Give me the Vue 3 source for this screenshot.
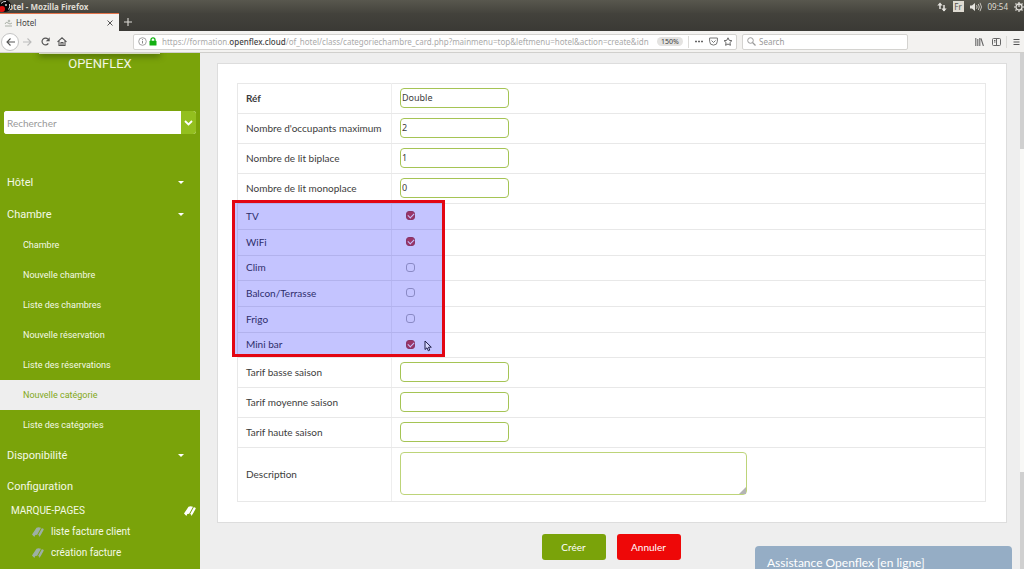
<script setup>
import { ref } from 'vue'

const search = ref('')
const query = ref('')
const description = ref('')

const chambreLinks = [
  'Chambre',
  'Nouvelle chambre',
  'Liste des chambres',
  'Nouvelle réservation',
  'Liste des réservations',
  'Nouvelle catégorie',
  'Liste des catégories',
]
const activeLink = 'Nouvelle catégorie'
const bookmarks = ['liste facture client', 'création facture', 'création client']

const details = ref([
  { id: 'ref', label: 'Réf', value: 'Double', required: true },
  { id: 'occupants', label: "Nombre d'occupants maximum", value: '2' },
  { id: 'biplace', label: 'Nombre de lit biplace', value: '1' },
  { id: 'monoplace', label: 'Nombre de lit monoplace', value: '0' },
])
const options = ref([
  { id: 'tv', label: 'TV', checked: true },
  { id: 'wifi', label: 'WiFi', checked: true },
  { id: 'clim', label: 'Clim', checked: false },
  { id: 'balcon', label: 'Balcon/Terrasse', checked: false },
  { id: 'frigo', label: 'Frigo', checked: false },
  { id: 'minibar', label: 'Mini bar', checked: true },
])
const prices = ref([
  { id: 'basse', label: 'Tarif basse saison', value: '' },
  { id: 'moyenne', label: 'Tarif moyenne saison', value: '' },
  { id: 'haute', label: 'Tarif haute saison', value: '' },
])
</script>

<template>
  <div class="screen">
    <header class="titlebar">
      <svg class="recorder" width="14" height="13" viewBox="0 0 14 13" aria-hidden="true">
        <circle cx="5" cy="6" r="6" fill="#080808" />
        <circle cx="2" cy="9" r="3" fill="#e01010" />
        <path d="M1 3.500Q3 1 6 1.500M9.500 4Q10.500 7 8.500 9.500" stroke="#ddd" fill="none" />
        <circle cx="6" cy="5" r="1" fill="#ccc" />
      </svg>
      <span class="title">Hotel - Mozilla Firefox</span>
      <div class="tray">
        <svg width="10" height="10" viewBox="0 0 10 10" aria-hidden="true">
          <path d="M3 7V2M7 3v6" stroke="#e6e4df" stroke-width="1.500" />
          <path d="M.3 3.500 3 .5l2.700 3zM4.300 6.500 7 9.500l2.700-3z" fill="#e6e4df" />
        </svg>
        <span class="lang">Fr</span>
        <svg width="12" height="10" viewBox="0 0 12 10" aria-hidden="true">
          <path d="M0 3.500h2L5 1v8L2 6.500H0z" fill="#e6e4df" />
          <path d="M6.500 3.200q1.200 1.800 0 3.600M8.300 2q2 3 0 6M10 .8q3 4.200 0 8.400" stroke="#c4c2bc" fill="none" />
        </svg>
        <span class="clock">09:54</span>
        <svg width="10" height="10" viewBox="0 0 10 10" aria-hidden="true">
          <circle cx="5" cy="5" r="3" fill="none" stroke="#e6e4df" stroke-width="1.300" />
          <path d="M5 0v5M0 5h1.500M8.500 5H10M1.500 1.500l1 1M8.500 1.500l-1 1M1.500 8.500l1-1M8.500 8.500l-1-1M5 8.500V10" stroke="#e6e4df" stroke-width="1.200" />
        </svg>
      </div>
    </header>

    <div class="tabs">
      <div class="tab">
        <svg width="9" height="8" viewBox="0 0 9 8" aria-hidden="true">
          <path d="M1 5q1-3 3-1t4 0M1 7h7" stroke="#aab0a6" fill="none" />
          <circle cx="5" cy="2" r="1.300" fill="#b9beb6" />
        </svg>
        <span class="tab-name">Hotel</span>
        <button class="plain" aria-label="Fermer l'onglet">
          <svg width="6" height="6" viewBox="0 0 6 6"><path d="M.5.5l5 5M5.500.5l-5 5" stroke="#555" /></svg>
        </button>
      </div>
      <button class="plain add" aria-label="Nouvel onglet">
        <svg width="8" height="8" viewBox="0 0 8 8"><path d="M4 0v8M0 4h8" stroke="#dcdad5" stroke-width="1.100" /></svg>
      </button>
    </div>

    <nav class="toolbar" aria-label="Navigation">
      <button class="plain back" aria-label="Précédent">
        <svg width="9" height="8" viewBox="0 0 9 8"><path d="M9 4H1M4.500.5 1 4l3.500 3.500" stroke="#555" stroke-width="1.100" fill="none" /></svg>
      </button>
      <button class="plain forward" aria-label="Suivant">
        <svg width="9" height="8" viewBox="0 0 9 8"><path d="M0 4h8M4.500.5 8 4 4.500 7.500" stroke="#bbb" stroke-width="1.100" fill="none" /></svg>
      </button>
      <button class="plain reload" aria-label="Actualiser">
        <svg width="9" height="9" viewBox="0 0 9 9"><path d="M7.300 6.300A3.400 3.400 0 1 1 7 2.200" stroke="#555" stroke-width="1.200" fill="none" /><path d="M8.700.3v3.900H4.800z" fill="#555" /></svg>
      </button>
      <button class="plain home" aria-label="Accueil">
        <svg width="10" height="9" viewBox="0 0 10 9"><path d="M.5 4.800 5 .8l4.500 4M2 4v4.500h6V4M4 8.500V5.500h2v3" stroke="#555" stroke-width="1.100" fill="none" /></svg>
      </button>
      <div class="urlbar">
        <svg width="9" height="9" viewBox="0 0 9 9" aria-hidden="true"><circle cx="4.500" cy="4.500" r="3.800" fill="none" stroke="#999" stroke-width=".9" /><path d="M4.500 4v2.500M4.500 2.200v1" stroke="#888" /></svg>
        <svg class="lock" width="8" height="9" viewBox="0 0 8 9" aria-hidden="true"><path d="M2 4V2.800a2 2 0 0 1 4 0V4" stroke="#12b012" stroke-width="1.300" fill="none" /><rect x=".5" y="3.800" width="7" height="4.700" rx=".6" fill="#12b012" /></svg>
        <span class="url">https://formation.<b>openflex.cloud</b>/of_hotel/class/categoriechambre_card.php?mainmenu=top&amp;leftmenu=hotel&amp;action=create&amp;idn</span>
        <button class="plain zoom">150%</button>
        <span class="divider"></span>
        <button class="plain" aria-label="Actions">
          <svg width="10" height="9" viewBox="0 0 10 9"><path d="M1 4.500h2M4 4.500h2M7 4.500h2" stroke="#666" stroke-width="1.500" /></svg>
        </button>
        <button class="plain" aria-label="Pocket">
          <svg width="9" height="9" viewBox="0 0 9 9"><path d="M.6 1h7.800v3.200a3.900 3.900 0 0 1-7.800 0zM2.500 3.500l2 2 2-2" stroke="#777" fill="none" /></svg>
        </button>
        <button class="plain" aria-label="Favori">
          <svg width="10" height="9" viewBox="0 0 10 9"><path d="M5 .8l1.200 2.500 2.700.4-2 1.900.5 2.700L5 7 2.600 8.300l.5-2.700-2-1.900 2.700-.4z" stroke="#666" fill="none" /></svg>
        </button>
      </div>
      <label class="websearch">
        <svg width="9" height="9" viewBox="0 0 9 9" aria-hidden="true"><circle cx="3.500" cy="3.500" r="2.800" fill="none" stroke="#999" /><path d="M5.500 5.500 8.500 8.500" stroke="#999" stroke-width="1.200" /></svg>
        <input v-model="query" type="text" placeholder="Search" aria-label="Search" />
      </label>
      <div class="tools">
        <button class="plain" aria-label="Bibliothèque">
          <svg width="9" height="8" viewBox="0 0 9 8"><path d="M.8 0v8M2.800 1v7M4.800 0v8M6 .5 8.400 8" stroke="#666" stroke-width="1.100" fill="none" /></svg>
        </button>
        <button class="plain" aria-label="Panneau latéral">
          <svg width="9" height="8" viewBox="0 0 9 8"><rect x=".5" y=".5" width="8" height="7" rx="1" fill="none" stroke="#666" /><path d="M4.500 1v6M2 2.500h1.500M2 4h1.500" stroke="#666" /></svg>
        </button>
        <span class="divider"></span>
        <button class="plain" aria-label="Menu">
          <svg width="7" height="8" viewBox="0 0 7 8"><path d="M.5 1.500h6M.5 4h6M.5 6.500h6" stroke="#555" /></svg>
        </button>
      </div>
    </nav>

    <div class="page">
      <aside class="sidebar">
        <div class="flap"></div>
        <div class="brand">OPENFLEX</div>
        <form class="find" @submit.prevent>
          <input v-model="search" type="text" placeholder="Rechercher" aria-label="Rechercher" />
          <button class="plain" aria-label="Choisir la recherche">
            <svg width="9" height="6" viewBox="0 0 9 6"><path d="M1 1l3.500 3.500L8 1" stroke="#fff" stroke-width="1.800" fill="none" /></svg>
          </button>
        </form>
        <nav class="menu" aria-label="Menu">
          <a class="top" href="#">Hôtel<i class="caret"></i></a>
          <a class="top" href="#">Chambre<i class="caret"></i></a>
          <a v-for="link in chambreLinks" :key="link" class="sub" :class="{ active: link === activeLink }" href="#">{{ link }}</a>
          <a class="top" href="#">Disponibilité<i class="caret"></i></a>
          <a class="top" href="#">Configuration</a>
        </nav>
        <div class="marks-head">
          <span>MARQUE-PAGES</span>
          <svg width="12" height="10" viewBox="0 0 12 10" aria-hidden="true">
            <path d="M0 7.500 4.500.8Q6.500-.2 9 .8L5 8Q3.200 7 2.400 10z" fill="#fff" />
            <path d="M5.800 8.400 9.800 1.300q1.700.1 2 1.200L8.800 8 7.200 10 7 8z" fill="#fff" />
          </svg>
        </div>
        <a v-for="mark in bookmarks" :key="mark" class="mark" href="#">
          <svg width="12" height="10" viewBox="0 0 12 10" aria-hidden="true">
            <path d="M0 7.500 4.500.8Q6.500-.2 9 .8L5 8Q3.200 7 2.400 10z" fill="#9db0a4" />
            <path d="M5.800 8.400 9.800 1.300q1.700.1 2 1.200L8.800 8 7.200 10 7 8z" fill="#9db0a4" />
          </svg>
          <span>{{ mark }}</span>
        </a>
      </aside>

      <main class="content">
        <form id="category" class="card" @submit.prevent>
          <div class="sheet">
            <table>
              <tbody>
                <tr v-for="field in details" :key="field.id" class="text-row">
                  <th scope="row" :class="{ required: field.required }"><label :for="field.id">{{ field.label }}</label></th>
                  <td><input :id="field.id" v-model="field.value" class="box" type="text" /></td>
                </tr>
              </tbody>
              <tbody class="checks">
                <tr v-for="option in options" :key="option.id">
                  <th scope="row"><label :for="option.id">{{ option.label }}</label></th>
                  <td><input :id="option.id" v-model="option.checked" class="tick" type="checkbox" /></td>
                </tr>
              </tbody>
              <tbody>
                <tr v-for="price in prices" :key="price.id" class="text-row">
                  <th scope="row"><label :for="price.id">{{ price.label }}</label></th>
                  <td><input :id="price.id" v-model="price.value" class="box" type="text" /></td>
                </tr>
                <tr class="area-row">
                  <th scope="row"><label for="description">Description</label></th>
                  <td>
                    <div class="area">
                      <textarea id="description" v-model="description"></textarea>
                      <svg class="grip" width="7" height="7" viewBox="0 0 7 7" aria-hidden="true"><path d="M7 0v7H0z" fill="#b4b4b4" /></svg>
                    </div>
                  </td>
                </tr>
              </tbody>
            </table>
            <div class="highlight">
              <svg class="pointer" width="8" height="12" viewBox="0 0 8 12" aria-hidden="true"><path d="M1 1v8.500l2-1.700 1.300 3 1.500-.7-1.300-2.900H7.300z" fill="#d8d8ff" stroke="#20204a" /></svg>
            </div>
          </div>
        </form>
        <div class="actions">
          <button class="plain create" type="submit" form="category">Créer</button>
          <button class="plain cancel" type="button">Annuler</button>
        </div>
        <button class="plain chat">Assistance Openflex [en ligne]</button>
      </main>
      <div class="scroll"><div class="thumb"></div><div class="track"></div><div class="rest"></div></div>
    </div>
  </div>
</template>

<style>
body {
  margin: 0;
  overflow: hidden;
}
</style>

<style scoped>
* {
  box-sizing: border-box;
}
.screen {
  display: flex;
  flex-direction: column;
  height: 100vh;
  overflow: hidden;
  font-family: "Noto Sans", sans-serif;
  font-size: 10px;
  color: #3c3c3c;
  background: #eee;
}
svg {
  display: block;
  flex: none;
}
a {
  text-decoration: none;
}
input,
textarea {
  font-family: inherit;
  color: inherit;
  margin: 0;
  outline: 0;
}
.plain {
  border: 0;
  background: none;
  padding: 0;
  margin: 0;
  font-family: inherit;
  color: inherit;
  display: flex;
  align-items: center;
  justify-content: center;
  flex: none;
}
.titlebar {
  height: 13px;
  flex: none;
  display: flex;
  align-items: center;
  position: relative;
  background: linear-gradient(#58574e, #45443d);
}
.recorder {
  position: absolute;
  left: 0;
  top: 0;
}
.title {
  padding-left: 2px;
  font-size: 8px;
  line-height: 12px;
  font-weight: 700;
  color: #dfdbd2;
}
.tray {
  margin-left: auto;
  display: flex;
  align-items: center;
  gap: 6px;
  color: #dfdbd2;
}
.lang {
  width: 11px;
  height: 11px;
  background: #dfdbd2;
  color: #55534c;
  font-size: 8px;
  line-height: 11px;
  text-align: center;
}
.clock {
  font-size: 8px;
  line-height: 12px;
}
.tabs {
  height: 18px;
  flex: none;
  display: flex;
  background: linear-gradient(#43423c, #3a3935);
}
.tab {
  width: 119px;
  display: flex;
  align-items: center;
  padding: 0 6px 0 4px;
  gap: 3px;
  background: #f3f2f0;
  border-top: 1px solid #e2734a;
}
.tab-name {
  flex: 1;
  font-size: 8px;
  line-height: 12px;
  color: #444;
}
.add {
  margin-left: 5px;
}
.toolbar {
  height: 22px;
  flex: none;
  display: flex;
  align-items: center;
  background: #f3f2f0;
  border-bottom: 1px solid #d0cfcc;
}
.back {
  width: 18px;
  height: 18px;
  margin-left: 1px;
  border: 1px solid #c4c4c4;
  border-radius: 50%;
  background: #fff;
}
.forward {
  margin-left: 4px;
}
.reload {
  margin-left: 9px;
}
.home {
  margin-left: 7px;
}
.urlbar {
  flex: 1;
  min-width: 0;
  height: 16px;
  margin-left: 66px;
  display: flex;
  align-items: center;
  gap: 5px;
  padding: 0 3px 0 4px;
  background: #fff;
  border: 1px solid #d4d3d0;
  border-radius: 2px;
}
.urlbar .lock {
  margin-left: -3px;
}
.url {
  flex: 1;
  min-width: 0;
  overflow: hidden;
  white-space: nowrap;
  font-size: 8px;
  line-height: 12px;
  color: #aaa;
}
.url b {
  font-weight: 500;
  color: #444;
}
.zoom {
  width: 26px;
  height: 9px;
  border-radius: 5px;
  background: #e4e3e1;
  font-size: 7px;
  line-height: 9px;
}
.divider {
  width: 1px;
  height: 12px;
  background: #dcdbd8;
}
.websearch {
  width: 166px;
  height: 16px;
  margin-left: 5px;
  display: flex;
  align-items: center;
  gap: 3px;
  padding: 0 4px;
  background: #fff;
  border: 1px solid #d4d3d0;
  border-radius: 2px;
}
.websearch input {
  border: 0;
  padding: 0;
  min-width: 0;
  flex: 1;
  font-size: 8px;
  line-height: 12px;
}
::placeholder {
  color: #999;
  opacity: 1;
}
.tools {
  display: flex;
  align-items: center;
  gap: 8px;
  margin-left: 67px;
  padding-right: 4px;
}
.tools .divider {
  margin: 0 -2px 0 -3px;
}
.page {
  flex: 1;
  min-height: 0;
  display: flex;
}
.sidebar {
  width: 200px;
  flex: none;
  overflow: hidden;
  position: relative;
  background: #7aa30a;
  color: #f4f9e6;
  font-family: Roboto, sans-serif;
}
.flap {
  position: absolute;
  left: 39px;
  top: -3px;
  width: 121px;
  height: 4px;
  background: #d5dcc0;
  box-shadow: 0 2px 6px rgba(40, 60, 0, 0.7);
}
.brand {
  padding-top: 3px;
  text-align: center;
  font-size: 13px;
  line-height: 16px;
}
.find {
  display: flex;
  height: 23px;
  margin: 39px 4px 0;
  border-radius: 3px;
  overflow: hidden;
  background: #fff;
}
.find input {
  flex: 1;
  min-width: 0;
  border: 0;
  padding: 0 3px;
  font-family: Lato, sans-serif;
  font-size: 10px;
  color: #444;
}
.find button {
  width: 15px;
  background: #93bf1f;
}
.menu {
  margin-top: 32px;
}
.menu a {
  display: flex;
  align-items: center;
  color: inherit;
}
.menu .top {
  height: 32px;
  padding: 0 16px 0 7px;
  font-size: 11px;
  justify-content: space-between;
}
.menu .sub ~ .top {
  height: 31px;
}
.caret {
  border: 3px solid transparent;
  border-top-color: #fff;
  border-bottom: 0;
}
.menu .sub {
  height: 30px;
  padding-left: 23px;
  font-size: 9px;
}
.menu a.active {
  background: #eee;
  color: #82a820;
}
.marks-head {
  height: 17px;
  display: flex;
  align-items: center;
  justify-content: space-between;
  padding: 0 4px 0 11px;
  margin-bottom: 2px;
  font-size: 10px;
}
.mark {
  display: flex;
  align-items: center;
  gap: 7px;
  height: 21px;
  padding-left: 32px;
  font-size: 10px;
  color: inherit;
}
.content {
  flex: 1;
  min-width: 0;
  position: relative;
  padding: 10px 13px 0 17px;
}
.card {
  background: #fff;
  border: 1px solid #ddd;
  padding: 19px 20px 20px 19px;
  font-family: Lato, sans-serif;
}
.sheet {
  position: relative;
}
table {
  width: 100%;
  border-collapse: collapse;
  table-layout: fixed;
}
th,
td {
  border-top: 1px solid #e8e8e8;
  border-bottom: 1px solid #e8e8e8;
  padding: 0 8px 2px;
  vertical-align: middle;
  text-align: left;
}
th {
  width: 154px;
  border-left: 1px solid #e8e8e8;
  border-right: 1px solid #eee;
  font-weight: 400;
  font-size: 10px;
  line-height: 14px;
  white-space: nowrap;
}
td {
  border-right: 1px solid #e8e8e8;
}
.required {
  font-weight: 700;
}
.text-row {
  height: 30px;
}
.checks tr {
  height: 26px;
}
.checks tr:nth-child(3n) {
  height: 25px;
}
.area-row {
  height: 54px;
}
.box {
  display: block;
  width: 109px;
  height: 20px;
  padding: 0 1px;
  border: 1px solid #a5c455;
  border-radius: 4px;
  background: #fff;
  font-family: "Noto Sans", sans-serif;
  font-size: 9px;
}
.tick {
  appearance: none;
  display: block;
  position: relative;
  width: 9px;
  height: 9px;
  margin-left: 6px;
  border: 1px solid #b4b4b4;
  border-radius: 3px;
  background: #fff;
}
.tick:checked {
  background: #c9443a;
  border-color: #b0443a;
}
.tick:checked::after {
  content: "";
  position: absolute;
  left: 1px;
  top: 1px;
  width: 5px;
  height: 3px;
  border: solid #fff;
  border-width: 0 0 1px 1px;
  transform: rotate(-45deg);
}
.area {
  position: relative;
  width: 347px;
  max-width: 100%;
}
textarea {
  display: block;
  width: 100%;
  height: 43px;
  resize: none;
  border: 1px solid #bdd479;
  border-radius: 4px;
  background: #fff;
  padding: 2px;
}
.grip {
  position: absolute;
  right: 1px;
  bottom: 1px;
}
.highlight {
  position: absolute;
  left: -5px;
  top: 117px;
  width: 213px;
  height: 157px;
  border: 3px solid #e30613;
  background: rgba(0, 0, 255, 0.23);
  pointer-events: none;
}
.pointer {
  position: absolute;
  right: 10px;
  bottom: 2px;
}
.actions {
  display: flex;
  justify-content: center;
  gap: 11px;
  padding: 11px 2px 0 0;
}
.actions button {
  width: 64px;
  height: 26px;
  border-radius: 3px;
  color: #fff;
  font-family: Lato, sans-serif;
  font-size: 10px;
}
.actions .create {
  background: #7aa30a;
}
.actions .cancel {
  background: #ee0808;
}
.chat {
  position: absolute;
  right: 8px;
  bottom: -8px;
  width: 257px;
  height: 31px;
  justify-content: flex-start;
  padding: 2px 0 0 12px;
  border-radius: 4px;
  background: #95adc5;
  color: #fff;
  font-family: Lato, sans-serif;
  font-size: 12px;
}
.scroll {
  width: 4px;
  flex: none;
  display: flex;
  flex-direction: column;
}
.thumb {
  flex: 96;
  background: #d0d0d0;
}
.track {
  flex: 323;
  background: #f8f8f6;
}
.rest {
  flex: 97;
  background: #d0d0d0;
}
</style>
